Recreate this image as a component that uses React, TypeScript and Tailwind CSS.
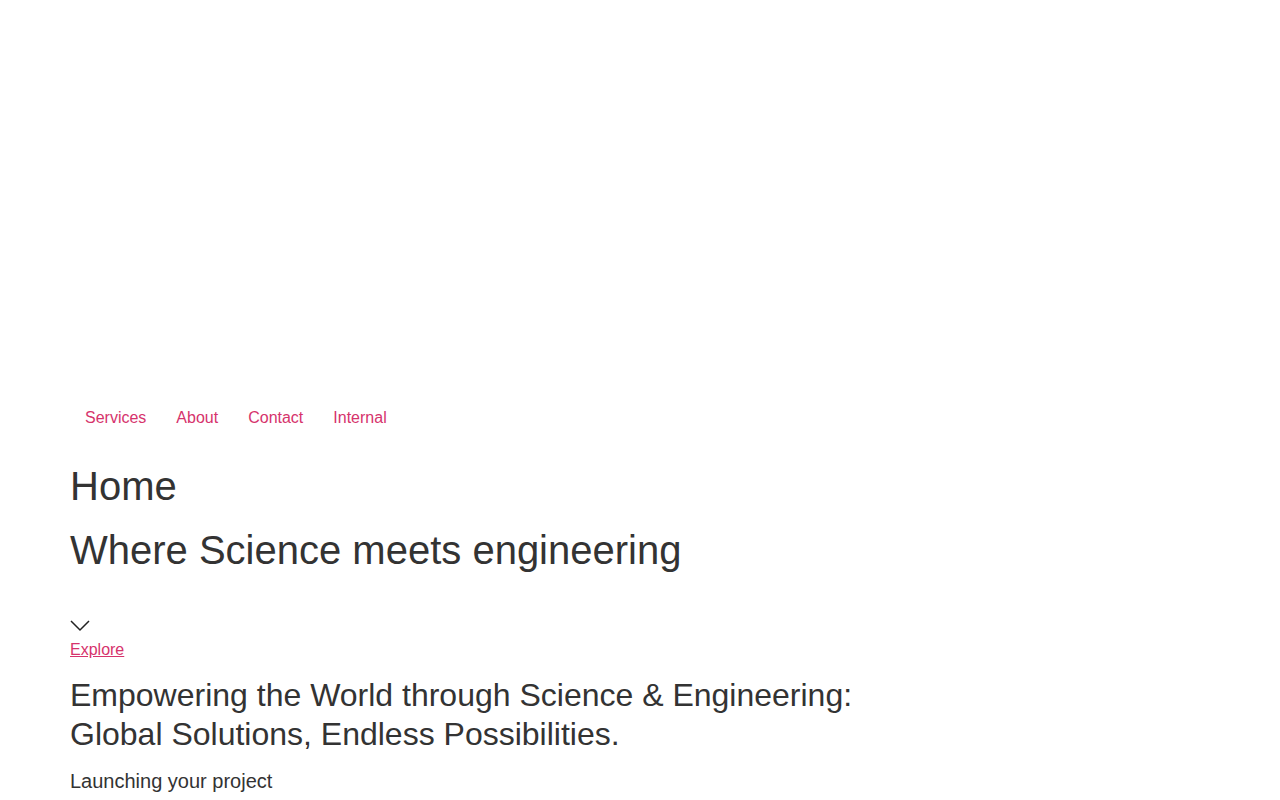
export default function App() {
  const links = ["Services", "About", "Contact", "Internal"];

  return (
    <div className="min-h-screen bg-white font-['Liberation_Sans',Arial,sans-serif] text-[#333333]">
      <div className="h-[400px]" />
      <div className="px-[70px]">
        <nav className="flex">
          {links.map((l) => (
            <a key={l} href="#" className="px-[15px] text-base leading-[36px] text-[#d6336c]">
              {l}
            </a>
          ))}
        </nav>
        <h1 className="mt-[26px] text-[40px] leading-[48px]">Home</h1>
        <h2 className="mt-[16px] text-[40px] leading-[48px]">Where Science meets engineering</h2>
        <div className="mt-[46px] flex flex-col items-start">
          <svg width="20" height="12" viewBox="0 0 20 12" fill="none" stroke="#222" strokeWidth="1.5">
            <path d="M1 1l9 9 9-9" />
          </svg>
          <a href="#" className="mt-[6px] text-base text-[#d6336c] underline">
            Explore
          </a>
        </div>
        <h3 className="mt-[14px] max-w-[820px] text-[32px] leading-[39px]">
          Empowering the World through Science &amp; Engineering: Global Solutions, Endless Possibilities.
        </h3>
        <p className="mt-[13px] text-xl">Launching your project</p>
      </div>
    </div>
  );
}
